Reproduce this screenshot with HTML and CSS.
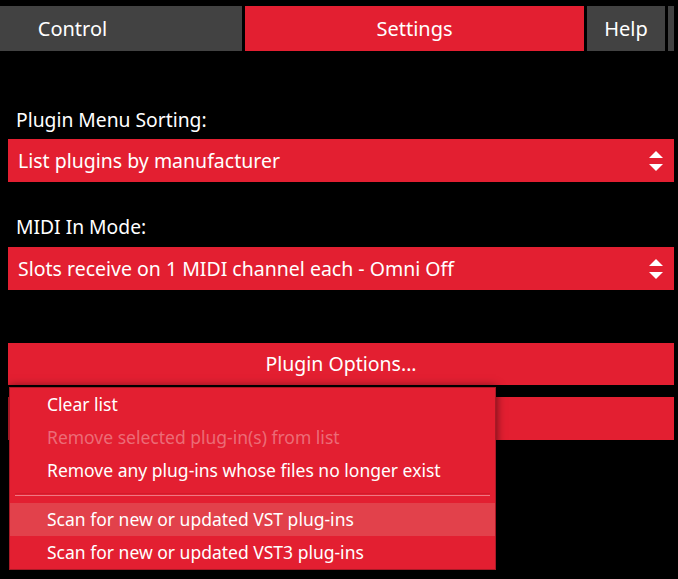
FILE: index.html
```html
<!DOCTYPE html>
<html lang="en">
<head>
  <meta charset="UTF-8">
  <title>Settings</title>
  <link rel="stylesheet" href="styles.css">
</head>
<body>
  <div class="tabs">
    <div class="tab tab-control">Control</div>
    <div class="tab tab-settings active">Settings</div>
    <div class="tab tab-help">Help</div>
    <div class="tab tab-more"></div>
  </div>

  <div class="panel">
    <div class="field field-sorting">
      <div class="label">Plugin Menu Sorting:</div>
      <div class="select">
        <span>List plugins by manufacturer</span>
        <svg class="arrows" width="14" height="20" viewBox="0 0 14 20">
          <path d="M7 0 L14 7 L0 7 Z" fill="#fff"/>
          <path d="M0 13 L14 13 L7 20 Z" fill="#fff"/>
        </svg>
      </div>
    </div>

    <div class="field field-midi">
      <div class="label">MIDI In Mode:</div>
      <div class="select">
        <span>Slots receive on 1 MIDI channel each - Omni Off</span>
        <svg class="arrows" width="14" height="20" viewBox="0 0 14 20">
          <path d="M7 0 L14 7 L0 7 Z" fill="#fff"/>
          <path d="M0 13 L14 13 L7 20 Z" fill="#fff"/>
        </svg>
      </div>
    </div>

    <div class="buttons">
      <div class="button">Plugin Options...</div>
      <div class="button button-hidden"></div>

      <div class="menu">
        <div class="menu-item">Clear list</div>
        <div class="menu-item disabled">Remove selected plug-in(s) from list</div>
        <div class="menu-item">Remove any plug-ins whose files no longer exist</div>
        <div class="menu-separator"></div>
        <div class="menu-item hover">Scan for new or updated VST plug-ins</div>
        <div class="menu-item">Scan for new or updated VST3 plug-ins</div>
      </div>
    </div>
  </div>
</body>
</html>
```

FILE: styles.css
```css
html {
  height: 100%;
  background: #000;
}
body {
  margin: 0;
  min-height: 100%;
  background: #000;
  color: #fff;
  font-family: "Noto Sans", "Open Sans", sans-serif;
}
.tabs {
  display: flex;
  gap: 3px;
  padding-top: 6px;
  margin-left: -97px;
}
.tab {
  height: 45px;
  line-height: 46px;
  text-align: center;
  font-size: 20px;
  background: #424242;
}
.tab.active {
  background: #e31f31;
}
.tab-control {
  width: 339px;
}
.tab-settings {
  width: 339px;
}
.tab-help {
  width: 78px;
}
.tab-more {
  width: 6px;
}
.panel {
  padding: 0 4px 0 8px;
}
.field-sorting {
  margin-top: 57px;
}
.field-midi {
  margin-top: 33px;
}
.label {
  font-size: 19.3px;
  line-height: 24px;
  padding-left: 8px;
  margin-bottom: 7px;
}
.field-midi .label {
  margin-bottom: 8px;
}
.select {
  display: flex;
  align-items: center;
  justify-content: space-between;
  height: 43px;
  padding: 0 11px 0 10px;
  background: #e31f31;
  font-size: 19.5px;
}
.buttons {
  position: relative;
  margin-top: 53px;
}
.button {
  height: 42px;
  line-height: 42px;
  text-align: center;
  font-size: 19.5px;
  background: #e31f31;
}
.button-hidden {
  margin-top: 12px;
  height: 43px;
}
.menu {
  position: absolute;
  left: 1px;
  top: 44px;
  width: 485px;
  background: #e31f31;
  border: 1px solid #a81a26;
  box-shadow: 0 0 9px rgba(0, 0, 0, 0.6);
}
.menu-item {
  height: 33px;
  line-height: 33px;
  padding-left: 37px;
  font-size: 17.5px;
}
.menu-item.disabled {
  color: rgba(255, 255, 255, 0.35);
}
.menu-item.hover {
  background: #e2414b;
}
.menu-separator {
  height: 16px;
  position: relative;
}
.menu-separator::after {
  content: "";
  position: absolute;
  left: 5px;
  right: 5px;
  top: 6px;
  height: 1px;
  border-top: 1px solid rgba(120, 0, 10, 0.15);
  border-bottom: 1px solid rgba(255, 255, 255, 0.4);
}
```
